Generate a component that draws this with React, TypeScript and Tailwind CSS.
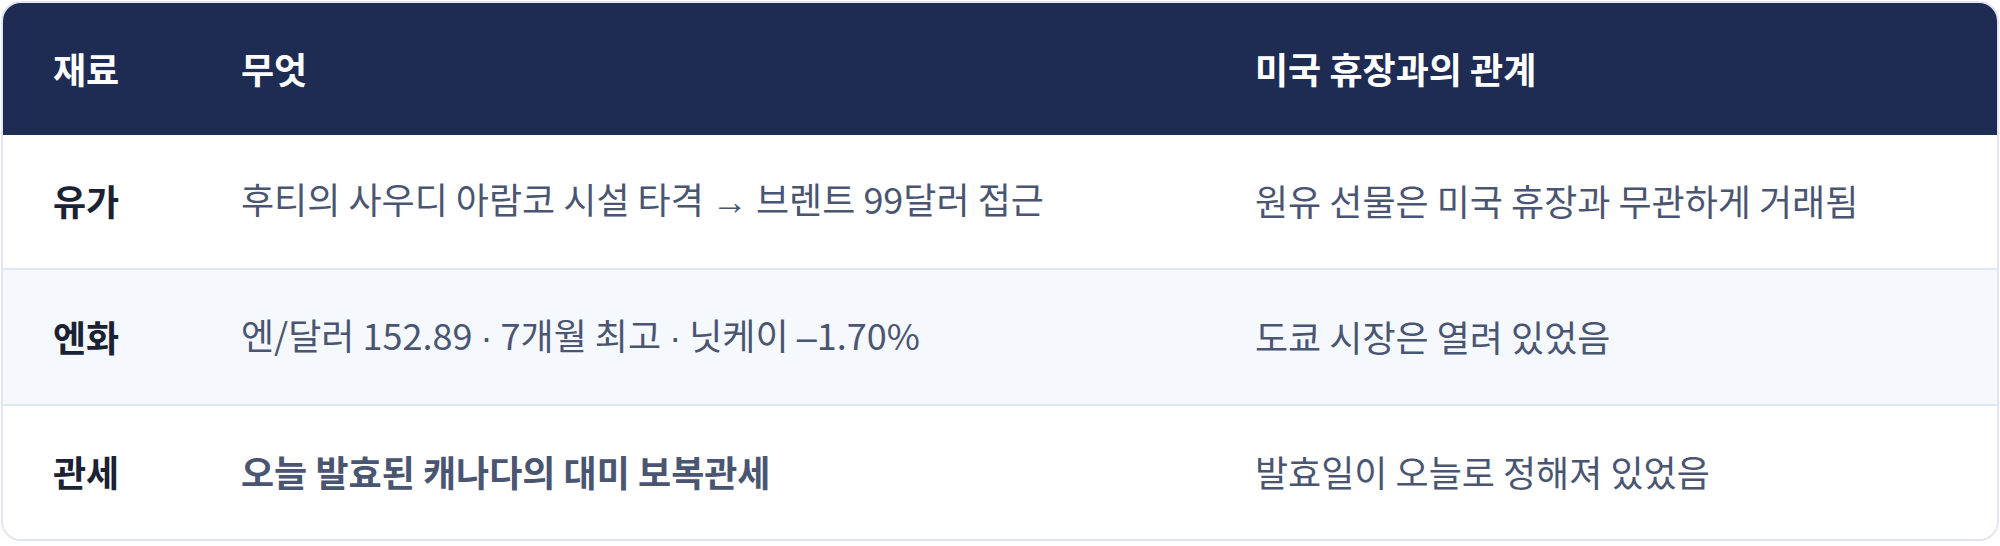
import React from "react";

const Sym = ({ c }: { c: string }) => (
  <span style={{ fontFamily: '"Liberation Sans", "DejaVu Sans", sans-serif' }}>{c}</span>
);

const rows = [
  {
    label: "유가",
    what: (
      <>
        후티의 사우디 아람코 시설 타격 <Sym c="→" /> 브렌트 99달러 접근
      </>
    ),
    rel: "원유 선물은 미국 휴장과 무관하게 거래됨",
    bold: false,
    alt: false,
    h: "h-[135px]",
  },
  {
    label: "엔화",
    what: (
      <>
        엔/달러 152.89 <Sym c="·" /> 7개월 최고 <Sym c="·" /> 닛케이 <Sym c="–" />1.70%
      </>
    ),
    rel: "도쿄 시장은 열려 있었음",
    bold: false,
    alt: true,
    h: "h-[136px]",
  },
  {
    label: "관세",
    what: <>오늘 발효된 캐나다의 대미 보복관세</>,
    rel: "발효일이 오늘로 정해져 있었음",
    bold: true,
    alt: false,
    h: "h-[133px]",
  },
];

export default function App() {
  return (
    <div
      className="w-[2000px] h-[546px] bg-white p-px"
      style={{ fontFamily: '"Noto Sans CJK KR", "Noto Sans", sans-serif' }}
    >
      <div className="w-[1998px] overflow-hidden rounded-[20px] border-2 border-[#dfe5f1] bg-white">
        <div className="grid h-[132px] grid-cols-[188px_1014px_1fr] items-center bg-[#1e2b53] text-[36px] leading-[48px] font-bold text-white">
          <div className="pl-[50px] -mt-[3px]">재료</div>
          <div className="pl-[50px] -mt-[3px]">무엇</div>
          <div className="pl-[50px] -mt-[3px]">미국 휴장과의 관계</div>
        </div>
        {rows.map((r, i) => (
          <div
            key={r.label}
            className={`grid ${r.h} grid-cols-[188px_1014px_1fr] items-center text-[36px] leading-[48px] ${
              r.alt ? "bg-[#f5f8fd]" : "bg-white"
            } ${i < rows.length - 1 ? "border-b-2 border-[#dfe5f1]" : ""}`}
          >
            <div className="pl-[50px] -mt-[3px] font-bold text-[#1a2233]">{r.label}</div>
            <div
              className={`pl-[50px] -mt-[3px] text-[#4a5572] ${
                r.bold ? "font-semibold" : "font-normal"
              }`}
            >
              {r.what}
            </div>
            <div className="pl-[50px] -mt-[3px] text-[#4a5572]">{r.rel}</div>
          </div>
        ))}
      </div>
    </div>
  );
}
